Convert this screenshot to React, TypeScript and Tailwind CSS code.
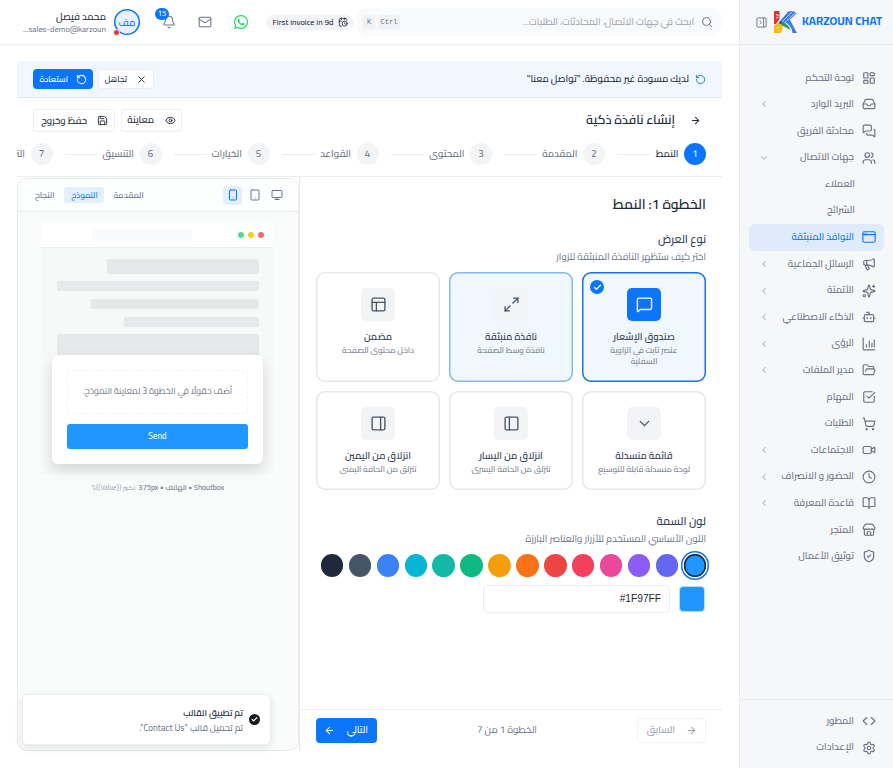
import React from 'react';
import {
  ArrowLeft,
  ArrowRight,
  Bell,
  BookOpen,
  Bot,
  CalendarClock,
  Check,
  ChevronDown,
  ChevronLeft,
  Clock,
  Code,
  Eye,
  FolderOpen,
  Inbox,
  LayoutDashboard,
  Mail,
  Maximize2,
  Megaphone,
  MessageSquare,
  MessagesSquare,
  Monitor,
  PanelLeft,
  PanelRight,
  PanelsTopLeft,
  RotateCcw,
  Save,
  Search,
  Settings,
  ShieldCheck,
  ShoppingCart,
  Smartphone,
  Sparkles,
  SquareCheckBig,
  Store,
  Tablet,
  Users,
  Video,
  X,
  type LucideIcon,
} from 'lucide-react';
import { FaWhatsapp } from 'react-icons/fa';

type IconType = LucideIcon | React.FC<{ className?: string }>;

interface NavItem {
  label: string;
  icon?: IconType;
  arrow?: 'left' | 'down';
  active?: boolean;
}

// Browser window outline for the popups entry
const WindowIcon: React.FC<{ className?: string }> = ({ className }) => (
  <svg
    viewBox="0 0 24 24"
    fill="none"
    stroke="currentColor"
    strokeWidth="2"
    strokeLinecap="round"
    strokeLinejoin="round"
    className={className}
  >
    <rect x="1.5" y="3" width="21" height="18" rx="2.5" />
    <path d="M1.5 8h21M5 5.5h.01M8 5.5h.01" />
  </svg>
);

const BarsIcon: React.FC<{ className?: string }> = ({ className }) => (
  <svg
    viewBox="0 0 24 24"
    fill="none"
    stroke="currentColor"
    strokeWidth="2"
    strokeLinecap="round"
    strokeLinejoin="round"
    className={className}
  >
    <path d="M2 2v18a2 2 0 0 0 2 2h18M7.500 13v4M12.500 7v10M17 11v6M21 5v12" />
  </svg>
);

const navItems: NavItem[] = [
  { label: 'لوحة التحكم', icon: LayoutDashboard },
  { label: 'البريد الوارد', icon: Inbox, arrow: 'left' },
  { label: 'محادثة الفريق', icon: MessagesSquare },
  { label: 'جهات الاتصال', icon: Users, arrow: 'down' },
  { label: 'العملاء' },
  { label: 'الشرائح' },
  { label: 'النوافذ المنبثقة', icon: WindowIcon, active: true },
  { label: 'الرسائل الجماعية', icon: Megaphone, arrow: 'left' },
  { label: 'الأتمتة', icon: Sparkles, arrow: 'left' },
  { label: 'الذكاء الاصطناعي', icon: Bot, arrow: 'left' },
  { label: 'الرؤى', icon: BarsIcon, arrow: 'left' },
  { label: 'مدير الملفات', icon: FolderOpen, arrow: 'left' },
  { label: 'المهام', icon: SquareCheckBig },
  { label: 'الطلبات', icon: ShoppingCart },
  { label: 'الاجتماعات', icon: Video, arrow: 'left' },
  { label: 'الحضور و الانصراف', icon: Clock, arrow: 'left' },
  { label: 'قاعدة المعرفة', icon: BookOpen, arrow: 'left' },
  { label: 'المتجر', icon: Store },
  { label: 'توثيق الأعمال', icon: ShieldCheck },
];

const steps = [
  { label: 'النمط', width: 'w-[22.5px]' },
  { label: 'المقدمة', width: 'w-[34.5px]' },
  { label: 'المحتوى', width: 'w-[35px]' },
  { label: 'القواعد', width: 'w-[30.5px]' },
  { label: 'الخيارات', width: 'w-[29.5px]' },
  { label: 'التنسيق', width: 'w-[30.5px]' },
  { label: 'الترجمة', width: 'w-[36px]' },
];

const displayTypes = [
  { title: 'صندوق الإشعار', text: 'عنصر ثابت في الزاوية السفلية', icon: MessageSquare, state: 'selected' },
  { title: 'نافذة منبثقة', text: 'نافذة وسط الصفحة', icon: Maximize2, state: 'hover' },
  { title: 'مضمن', text: 'داخل محتوى الصفحة', icon: PanelsTopLeft, state: '' },
  { title: 'قائمة منسدلة', text: 'لوحة منسدلة قابلة للتوسيع', icon: ChevronDown, state: '' },
  { title: 'انزلاق من اليسار', text: 'تنزلق من الحافة اليسرى', icon: PanelLeft, state: '' },
  { title: 'انزلاق من اليمين', text: 'تنزلق من الحافة اليمنى', icon: PanelRight, state: '' },
];

const swatches = [
  'bg-[#6366f1]',
  'bg-[#8b5cf6]',
  'bg-[#ec4899]',
  'bg-[#f43f5e]',
  'bg-[#ef4444]',
  'bg-[#f97316]',
  'bg-[#f59e0b]',
  'bg-[#10b981]',
  'bg-[#14b8a6]',
  'bg-[#06b6d4]',
  'bg-[#3b82f6]',
  'bg-[#475569]',
  'bg-[#1e293b]',
];

const Logo = () => (
  <svg viewBox="0 0 24 24" className="h-6 w-6" fill="none">
    <path d="M1 1h5.500v8L3 14H1z" fill="#e5322d" />
    <path d="M3 4.500l2.500 1M3 8l2.500-1" stroke="#f6f7f9" strokeWidth="1.200" />
    <path d="M14 3c2.500-3 8-2.500 9.500.5L11 15 6.500 11.500z" fill="#3f7de0" />
    <path d="M19.500 1.500L9 12M22 3L11 13.500" stroke="#b9d2f8" strokeWidth="1" />
    <path d="M1 15.500l5.500-3 3.500 5-2.500 5.500H1z" fill="#fbb616" />
    <path d="M3.500 18.500l2.500-1.500M5 21l2-1.500" stroke="#fde7a8" strokeWidth="1" />
    <path d="M8.500 13c4 0 8 2.500 9 7l-3.500-2-6-3z" fill="#2a9d4b" />
    <path d="M12.500 12.500l4-3.500L24 23h-4.500c-.5-5-3-8.500-7-10.500z" fill="#3f7de0" />
    <circle cx="7.500" cy="12.800" r="1.200" fill="#2b3a55" />
  </svg>
);

const NavRow: React.FC<{ item: NavItem }> = ({ item }) => {
  const Icon = item.icon;
  return (
    <div
      className={`flex h-[26.6px] items-center rounded-md pr-2 pl-[10px] text-[9.7px] font-medium ${
        item.active ? 'bg-[#e0ebf9] text-[#0b76fb]' : 'text-[#6b7280]'
      }`}
    >
      {Icon ? (
        <>
          <Icon className="ml-2 h-[14px] w-[14px] shrink-0" />
          <span>{item.label}</span>
        </>
      ) : (
        <span className="mr-[21px]">{item.label}</span>
      )}
      {item.arrow === 'left' && (
        <ChevronLeft strokeWidth={2.4} className="mr-auto h-[10px] w-[10px] text-gray-400" />
      )}
      {item.arrow === 'down' && (
        <ChevronDown strokeWidth={2.4} className="mr-auto h-[10px] w-[10px] text-gray-400" />
      )}
    </div>
  );
};

const Sidebar = () => (
  <aside className="flex w-[154px] shrink-0 flex-col border-l border-[#e8eaed] bg-[#f6f7f9]">
    <div className="flex h-[45px] shrink-0 items-center border-b border-[#e8eaed] pr-[11px]">
      <span className="w-[80px] whitespace-nowrap text-[11.7px] font-bold text-[#0b76fb]">
        KARZOUN CHAT
      </span>
      <span className="mr-[5px]">
        <Logo />
      </span>
      <svg
        viewBox="0 0 24 24"
        className="mr-[6px] h-[11px] w-[11px] text-gray-500"
        fill="none"
        stroke="currentColor"
        strokeWidth="2"
      >
        <rect x="2" y="2" width="20" height="20" rx="2" />
        <path d="M16.500 2v20M8 8l4 4-4 4" />
      </svg>
    </div>
    <nav className="px-[9px] pt-[19.5px]">
      {navItems.map((item) => (
        <NavRow key={item.label} item={item} />
      ))}
    </nav>
    <div className="mt-auto border-t border-[#e8eaed] px-[9px] pt-[8px] pb-[7px]">
      <NavRow item={{ label: 'المطور', icon: Code }} />
      <NavRow item={{ label: 'الإعدادات', icon: Settings }} />
    </div>
  </aside>
);

const Header = () => (
  <header className="flex h-[45px] shrink-0 items-center border-b border-[#ebedf0] pr-[17px]">
    <div className="flex h-[28px] w-[366px] shrink-0 items-center rounded-xl bg-[#f9fafb] pr-[9px] pl-[7px]">
      <Search className="h-[12px] w-[12px] text-gray-500" />
      <span className="mr-[7px] text-[9.7px] text-gray-400">
        ابحث في جهات الاتصال، المحادثات، الطلبات...
      </span>
      <div className="mr-auto flex gap-[3px] font-['Liberation_Mono',monospace] text-[7px] text-gray-500">
        <kbd className="flex h-[14px] w-[22px] items-center justify-center rounded-[3px] bg-[#f1f2f4] font-[inherit]">
          Ctrl
        </kbd>
        <kbd className="flex h-[14px] w-[12px] items-center justify-center rounded-[3px] bg-[#f1f2f4] font-[inherit]">
          K
        </kbd>
      </div>
    </div>
    <div className="mr-[2px] flex h-[15px] w-[88px] shrink-0 items-center justify-center gap-1 rounded-full bg-[#f3f4f6] text-[8.3px] font-medium text-gray-800">
      <CalendarClock className="h-[10px] w-[10px]" />
      <span dir="ltr" className="whitespace-nowrap">
        First invoice in 9d
      </span>
    </div>
    <FaWhatsapp className="mr-[17px] h-[16px] w-[16px] text-[#25d366]" />
    <Mail strokeWidth={1.8} className="mr-[21px] h-[14px] w-[14px] text-gray-500" />
    <div className="relative mr-[22px]">
      <Bell strokeWidth={1.8} className="h-[14px] w-[14px] text-gray-500" />
      <span className="absolute -top-[7px] -left-[7px] flex h-[12px] w-[14px] items-center justify-center rounded-full bg-[#0b76fb] text-[7.5px] font-medium text-white">
        15
      </span>
    </div>
    <div className="relative mr-[22px] flex h-[26px] w-[26px] items-center justify-center rounded-full bg-[#e8f1fd] text-[10px] font-medium text-[#0b76fb] ring-[1.5px] ring-[#0b76fb] ring-inset">
      <span>مف</span>
      <span className="absolute -bottom-[1px] -left-[1px] h-[7px] w-[7px] rounded-full border border-white bg-[#ef2b2b]" />
    </div>
    <div className="mr-2 text-right">
      <div className="text-[9.7px] leading-[13px] font-medium text-gray-800">محمد فيصل</div>
      <div className="text-[8.3px] leading-[12px] text-gray-500">sales-demo@karzoun...</div>
    </div>
  </header>
);

const DraftBanner = () => (
  <div className="flex h-[37px] shrink-0 items-center border-b border-[#d9e8fb] bg-[#f0f7ff] pr-[16px] pl-4">
    <RotateCcw className="h-[11px] w-[11px] text-[#0b76fb]" />
    <span className="mr-[6px] text-[9.7px] font-medium text-gray-800">
      لديك مسودة غير محفوظة. "تواصل معنا"
    </span>
    <button className="mr-auto flex h-[20px] w-[56px] items-center gap-[9px] rounded border border-[#eceef1] bg-white pr-[6px] text-[8.3px] font-medium text-gray-800">
      <X className="h-[11px] w-[11px]" />
      تجاهل
    </button>
    <button className="mr-[5px] flex h-[20px] w-[60px] items-center gap-[8px] rounded bg-[#0b76fb] pr-[6px] text-[8.3px] font-medium text-white">
      <RotateCcw strokeWidth={2.2} className="h-[11px] w-[11px]" />
      استعادة
    </button>
  </div>
);

const TitleBar = () => (
  <div className="flex h-[45px] shrink-0 items-center pr-[21px] pl-4">
    <ArrowRight strokeWidth={2.3} className="h-[11px] w-[11px] text-gray-800" />
    <h1 className="mr-[15px] text-[12.5px] font-semibold text-gray-800">إنشاء نافذة ذكية</h1>
    <button className="mr-auto flex h-[23px] w-[61px] items-center gap-[11px] rounded border border-[#eceef1] bg-white pr-[5px] text-[9.7px] font-medium text-gray-800">
      <Eye className="h-[11px] w-[11px]" />
      معاينة
    </button>
    <button className="mr-[6px] flex h-[23px] w-[82px] items-center gap-[10px] rounded border border-[#eceef1] bg-white pr-[6px] text-[9.6px] font-medium whitespace-nowrap text-gray-800">
      <Save className="h-[11px] w-[11px]" />
      حفظ وخروج
    </button>
  </div>
);

const Stepper = () => (
  <div className="flex h-[34px] shrink-0 items-start overflow-hidden border-b border-[#ebedf0] pr-[16px]">
    {steps.map((step, i) => (
      <div key={step.label} className="flex shrink-0 items-center">
        <span
          className={`flex h-[22px] w-[22px] items-center justify-center rounded-full text-[9.7px] font-medium ${
            i === 0 ? 'bg-[#0b76fb] text-white' : 'bg-[#f3f4f6] text-gray-500'
          }`}
        >
          {i + 1}
        </span>
        <span
          className={`mr-[5.5px] text-[9.7px] font-medium whitespace-nowrap ${step.width} ${
            i === 0 ? 'text-gray-800' : 'text-gray-500'
          }`}
        >
          {step.label}
        </span>
        {i < steps.length - 1 && <span className="mr-[6px] ml-[12px] h-px w-[33px] bg-[#e9ebee]" />}
      </div>
    ))}
  </div>
);

const TypeCards = () => (
  <div className="mt-[8px] grid grid-cols-3 grid-rows-[110px_99px] gap-[9px]">
    {displayTypes.map(({ title, text, icon: Icon, state }) => (
      <div
        key={title}
        className={`relative flex flex-col items-center rounded-[9px] pt-[15.5px] text-center ring-[1.5px] ring-inset ${
          state === 'selected'
            ? 'bg-[#f0f7ff] ring-[#1672e6]'
            : state === 'hover'
              ? 'bg-[#f0f7ff] ring-[#84b8f5]'
              : 'bg-white ring-[#e5e7eb]'
        }`}
      >
        {state === 'selected' && (
          <span className="absolute top-[8px] left-[8px] flex h-[14px] w-[14px] items-center justify-center rounded-full bg-[#0b76fb] text-white">
            <Check strokeWidth={3.5} className="h-[9px] w-[9px]" />
          </span>
        )}
        <span
          className={`flex h-[33px] w-[34px] items-center justify-center rounded-[5px] ${
            state === 'selected' ? 'bg-[#0b76fb] text-white' : 'bg-[#f3f4f6] text-gray-600'
          }`}
        >
          <Icon strokeWidth={1.9} className="h-[17px] w-[17px]" />
        </span>
        <span className="mt-[9px] text-[9.7px] leading-[14px] font-semibold whitespace-nowrap text-gray-700">
          {title}
        </span>
        <span className="mt-px max-w-[94px] text-[8.3px] leading-[11.200px] text-gray-500">
          {text}
        </span>
      </div>
    ))}
  </div>
);

const StepForm = () => (
  <section className="flex min-w-0 flex-1 flex-col">
    <div className="flex-1 px-[16px] pt-[15px]">
      <h2 className="text-[13.9px] leading-6 font-semibold text-gray-800">الخطوة 1: النمط</h2>
      <h3 className="mt-[15px] text-[11px] leading-4 font-semibold text-gray-700">نوع العرض</h3>
      <p className="mt-[3px] text-[9.7px] leading-[14px] text-gray-500">
        اختر كيف ستظهر النافذة المنبثقة للزوار
      </p>
      <TypeCards />

      <h3 className="mt-[23px] text-[11px] leading-4 font-semibold text-gray-700">لون السمة</h3>
      <p className="mt-[3px] text-[9.7px] leading-[14px] text-gray-500">
        اللون الأساسي المستخدم للأزرار والعناصر البارزة
      </p>
      <div className="mt-[8px] flex gap-[5.4px]">
        <span className="h-[22.500px] w-[22.500px] shrink-0 rounded-full bg-[#1f97ff] ring-[1.5px] ring-[#1672e6] ring-offset-[1.5px] inset-ring-[1.5px] inset-ring-[#1e293b]" />
        {swatches.map((color) => (
          <span key={color} className={`h-[22.500px] w-[22.500px] shrink-0 rounded-full ${color}`} />
        ))}
      </div>
      <div className="mt-[8px] flex items-center pr-px">
        <span className="h-[26px] w-[26px] rounded border border-[#b9dcfb] bg-[#1f97ff]" />
        <span className="mr-[9px] flex h-[28px] w-[187px] items-center rounded-[5px] border border-[#eceef1] pr-[8px] font-['Liberation_Sans',sans-serif] text-[10.2px] text-gray-800">
          <bdi dir="ltr">#1F97FF</bdi>
        </span>
      </div>
    </div>

    <div className="flex h-[42px] shrink-0 items-center justify-between border-t border-[#ebedf0] px-[16px]">
      <button className="flex h-[25px] w-[69px] items-center gap-[11px] rounded border border-[#f1f2f4] pr-[8px] text-[9.7px] font-medium text-gray-400">
        <ArrowRight strokeWidth={2.3} className="h-[11px] w-[11px]" />
        السابق
      </button>
      <span className="text-[9.7px] text-gray-500">الخطوة 1 من 7</span>
      <button className="flex h-[25px] w-[61px] items-center gap-[12px] rounded bg-[#0b76fb] pr-[9px] text-[9.7px] font-medium text-white">
        التالي
        <ArrowLeft strokeWidth={2.3} className="h-[11px] w-[11px]" />
      </button>
    </div>
  </section>
);

const BrowserMock = () => (
  <div className="relative mt-[11px] mr-[25px] h-[251px] w-[232px] bg-[#f7f9f9]">
    <div className="flex h-[25px] items-center border-b border-[#eceeef] bg-white pr-[9px]">
      <div className="flex gap-1">
        <span className="h-[6px] w-[6px] rounded-full bg-[#f26a6a]" />
        <span className="h-[6px] w-[6px] rounded-full bg-[#facc15]" />
        <span className="h-[6px] w-[6px] rounded-full bg-[#4ade80]" />
      </div>
      <span className="mr-[46px] h-[12px] w-[100px] rounded-[3px] bg-[#f9fafb]" />
    </div>
    <div className="flex flex-col gap-[7.7px] px-[14px] pt-[11px]">
      <span className="h-[14.500px] w-[152px] rounded-[2px] bg-[#e6e8e9]" />
      <span className="h-[10px] w-[202px] rounded-[2px] bg-[#e6e8e9]" />
      <span className="h-[10px] w-[168px] rounded-[2px] bg-[#e6e8e9]" />
      <span className="h-[10px] w-[135px] rounded-[2px] bg-[#e6e8e9]" />
      <span className="h-[44px] w-[202px] rounded-[2px] bg-[#e6e8e9]" />
    </div>

    {/* Popup shown over the page */}
    <div className="absolute right-[10px] bottom-[10px] h-[109px] w-[211px] rounded-[6px] bg-white p-[15px] shadow-[0_6px_14px_rgba(0,0,0,0.14)]">
      <div className="flex h-[44px] items-center justify-center rounded border border-dashed border-[#f1f3f5] text-[8.7px] whitespace-nowrap text-gray-500">
        أضف حقولًا في الخطوة 3 لمعاينة النموذج.
      </div>
      <div className="mt-[10px] flex h-[25px] items-center justify-center rounded-[3px] bg-[#1f97ff] text-[8.7px] font-medium text-white">
        Send
      </div>
    </div>
  </div>
);

const Preview = () => (
  <section className="flex w-[282px] shrink-0 flex-col overflow-hidden rounded-[10px] border border-[#e8eaed] bg-[#fafcfb]">
    <div className="flex h-[33px] shrink-0 items-center border-b border-[#e8eaed] bg-[#fdfefe] pr-[15px] pl-[10px]">
      <Monitor className="h-[12px] w-[12px] text-gray-500" />
      <Tablet className="mr-[10px] h-[12px] w-[12px] text-gray-500" />
      <span className="mr-[7px] flex h-[19px] w-[19px] items-center justify-center rounded bg-[#e3effd] text-[#0b76fb]">
        <Smartphone className="h-[12px] w-[12px]" />
      </span>
      <div className="mr-auto flex items-center text-[8.3px] font-medium text-gray-500">
        <span className="px-[6px]">المقدمة</span>
        <span className="mx-[3px] flex h-[16px] w-[40px] items-center justify-center rounded bg-[#e3effd] text-[#0b76fb]">
          النموذج
        </span>
        <span className="px-[7px]">النجاح</span>
      </div>
    </div>
    <BrowserMock />
    <div className="mt-[7px] flex h-[14px] items-center justify-center gap-[3px] text-[7.6px] leading-none font-medium whitespace-nowrap text-gray-500">
      <span>Shoutbox • الهاتف • 375px</span>
      <span className="text-[6.9px] font-normal text-gray-400">تكبير {'{{Value}}%'}</span>
    </div>
  </section>
);

const Toast = () => (
  <div className="absolute top-[694px] left-[22px] flex h-[51px] w-[249px] items-center rounded-[5px] border border-[#eceef1] bg-white pr-[10px] shadow-[0_3px_8px_rgba(0,0,0,0.1)]">
    <span className="flex h-[11px] w-[11px] items-center justify-center rounded-full bg-[#171a1f] text-white">
      <Check strokeWidth={4} className="h-[7px] w-[7px]" />
    </span>
    <div className="mr-[6px]">
      <div className="text-[9px] leading-[15px] font-semibold text-gray-800">تم تطبيق القالب</div>
      <div className="text-[9px] leading-[15px] text-gray-500">تم تحميل قالب "Contact Us".</div>
    </div>
  </div>
);

const App: React.FC = () => (
  <div
    dir="rtl"
    className="relative flex h-[768px] w-[893px] overflow-hidden bg-white font-['Cairo','Noto_Sans_Arabic','Noto_Sans',sans-serif]"
  >
    <Sidebar />
    <main className="flex min-w-0 flex-1 flex-col">
      <Header />
      <div className="mx-[17px] mt-[16px] mb-[17px] flex min-h-0 flex-1 flex-col">
        <DraftBanner />
        <TitleBar />
        <Stepper />
        <div className="flex min-h-0 flex-1">
          <StepForm />
          <div className="flex border-r border-[#e8eaed] pt-px">
            <Preview />
          </div>
        </div>
      </div>
    </main>
    <Toast />
  </div>
);

export default App;
